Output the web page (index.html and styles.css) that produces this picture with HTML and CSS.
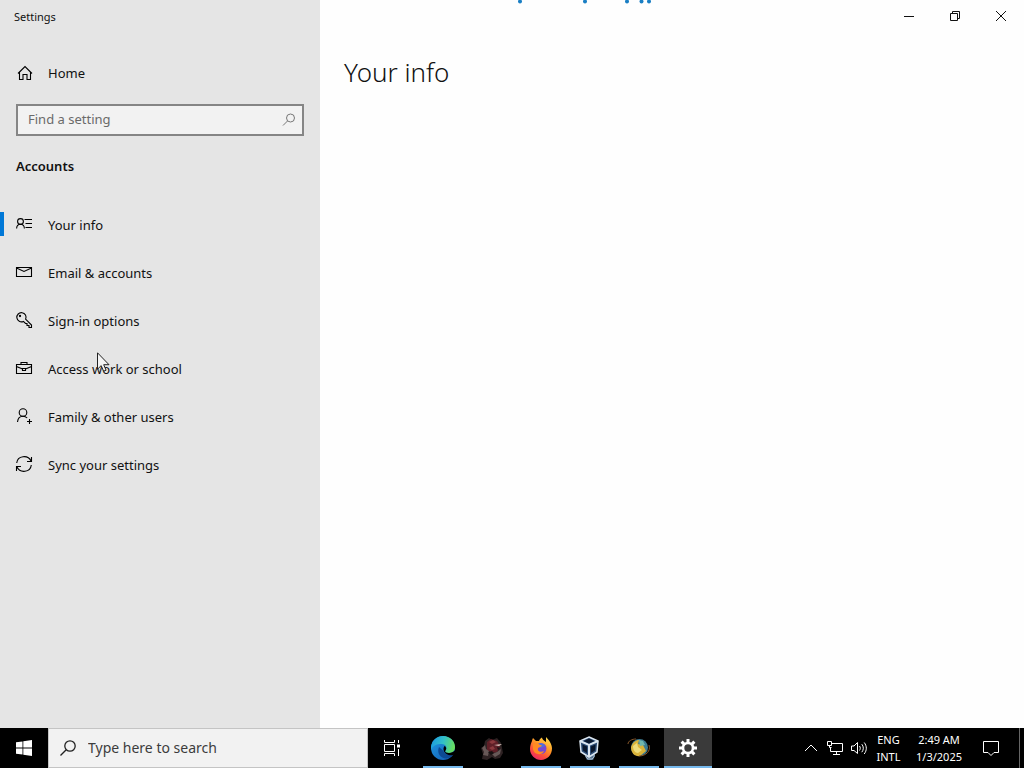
FILE: index.html
```html
<!DOCTYPE html>
<html lang="en">
<head>
<meta charset="utf-8">
<meta name="viewport" content="width=device-width, initial-scale=1">
<title>Settings</title>
<link rel="stylesheet" href="styles.css">
</head>
<body>
<div class="window">
  <aside class="sidebar">
    <div class="app-title">Settings</div>
    <a class="home" href="#home">
      <svg class="icon" viewBox="0 0 16 16"><path d="M2 8.500 9 1.500l7 7M3.500 7.500v7H7v-5h4v5h3.500v-7"/></svg>
      <span>Home</span>
    </a>
    <div class="find">
      <input class="find-input" type="search" placeholder="Find a setting" aria-label="Find a setting">
      <svg class="find-icon" viewBox="0 0 16 16"><circle cx="9.500" cy="6" r="4"/><path d="M6.500 9 2 13.500"/></svg>
    </div>
    <h2 class="section">Accounts</h2>
    <nav class="nav">
      <a class="nav-item active" href="#info">
        <svg class="icon" viewBox="0 0 16 16"><circle cx="4.500" cy="5.500" r="2.900"/><path d="M.6 12.500C.8 6.800 8.200 6.800 8.400 12.500M8.500 3.500H16M9.500 7.500H16M9.500 11.500H16"/></svg>
        <span>Your info</span>
      </a>
      <a class="nav-item" href="#email">
        <svg class="icon" viewBox="0 0 16 16"><path d="M.5 3.500h15v9H.5zM.5 4 8 7.500 15.500 4"/></svg>
        <span>Email &amp; accounts</span>
      </a>
      <a class="nav-item" href="#signin">
        <svg class="icon" viewBox="0 0 16 16"><path d="M9.600 7.200 15.500 13v2.500H13v-2h-2v-2H9.500L7.400 9.400A4.600 4.600 0 1 1 9.600 7.200z"/><circle cx="4" cy="4" r=".6"/></svg>
        <span>Sign-in options</span>
      </a>
      <a class="nav-item" href="#work">
        <svg class="icon" viewBox="0 0 16 16"><path d="M.5 4.500h15v9H.5zM5 4.500v-2h6v2M.5 6.500l6 2.500M15.500 6.500l-6 2.500M6.500 8.500v2h3v-2z"/></svg>
        <span>Access work or school</span>
      </a>
      <a class="nav-item" href="#family">
        <svg class="icon" viewBox="0 0 16 16"><circle cx="7" cy="4.500" r="3.800"/><path d="M1.500 14c.4-4 2.500-5.800 5.500-5.800 1.800 0 3.200.7 4.200 1.800M13.500 11v5M11 13.500h5"/></svg>
        <span>Family &amp; other users</span>
      </a>
      <a class="nav-item" href="#sync">
        <svg class="icon" viewBox="0 0 16 16"><path d="M.7 7C1.500-.5 12-1.500 15 5M15.500 1v4.500H11M15.300 9C14.500 16.500 4 17.500 1 11M.5 15v-4.500H5"/></svg>
        <span>Sync your settings</span>
      </a>
    </nav>
  </aside>
  <main class="content">
    <header class="titlebar">
      <button class="win-btn" aria-label="Minimize"><svg viewBox="0 0 10 10"><path d="M0 5.500h10"/></svg></button>
      <button class="win-btn" aria-label="Restore"><svg viewBox="0 0 10 10"><path d="M.5 2.500h7v7h-7zM2.500 2.500v-2h7v7h-2"/></svg></button>
      <button class="win-btn" aria-label="Close"><svg viewBox="0 0 10 10"><path d="m0 0 10 10M10 0 0 10"/></svg></button>
    </header>
    <h1 class="page-title">Your info</h1>
    <svg class="progress" viewBox="0 0 134 4"><circle cx="3" cy="1.500" r="2"/><circle cx="68" cy="1.500" r="2"/><circle cx="110" cy="1.500" r="2"/><circle cx="124.500" cy="1.500" r="2"/><circle cx="132" cy="1.500" r="2"/></svg>
  </main>
  <svg class="cursor" viewBox="0 0 13 20"><path d="M.5.800v16.400l3.700-3.600 2.400 5.600 2.500-1-2.400-5.500H12z"/></svg>
</div>
<footer class="taskbar">
  <button class="task start" aria-label="Start"><svg class="win-logo" viewBox="0 0 16 16"><path d="M0 2.300 6.500 1.400v6.200H0zM7.300 1.300 16 0v7.600H7.300zM0 8.400h6.500v6.200L0 13.700zM7.300 8.400H16V16l-8.700-1.300z"/></svg></button>
  <label class="search">
    <svg class="search-icon" viewBox="0 0 16 16"><circle cx="10" cy="6" r="5.200"/><path d="M6.200 9.800.5 15.500"/></svg>
    <input class="search-input" type="search" placeholder="Type here to search" aria-label="Type here to search">
  </label>
  <button class="task" aria-label="Task view"><svg class="task-view" viewBox="0 0 16 16"><path d="M.5 0v2.500h10V0M.5 4.500h10v7H.5zM.5 16v-2.500h10V16M14.500 0v3M14.500 9v7"/><path class="solid" d="M13 4.500h3v3h-3z"/></svg></button>
  <div class="apps">
    <button class="task running" aria-label="Edge">
      <svg class="app-icon" viewBox="0 0 24 24">
        <defs>
          <linearGradient id="edge-top" x1="0" y1=".3" x2="1" y2=".5"><stop offset="0" stop-color="#1c9be0"/><stop offset=".5" stop-color="#32c0c8"/><stop offset="1" stop-color="#6be05a"/></linearGradient>
          <linearGradient id="edge-low" x1="0" y1="0" x2="1" y2="1"><stop offset="0" stop-color="#1f9de4"/><stop offset="1" stop-color="#1256b0"/></linearGradient>
        </defs>
        <circle cx="12" cy="12" r="12" fill="url(#edge-low)"/>
        <path fill="#0d4a94" d="M8 11c-3 7 3 13 10 11 2-.8 3.500-2 4.500-3.800-4 2-9 .8-10-3.200z"/>
        <path fill="url(#edge-top)" d="M0 11C1 4 6 0 12 0c7 0 12 5 12 11 0 4-3 6-6 6-3.500 0-4.500-1.500-3.500-2.500 2-2 1-6.500-4-6.500C6 8 2 9 0 14z"/>
        <path fill="#000" d="M14.500 14.500c-1 1 0 2.500 3.500 2.500 2.500 0 5-1 6.500-3-.2 2-1 3.600-2 4.900-5 1.600-10-1.400-10-5.900 0-1.300.6-2.400 1.200-3 1.700 1 1.900 3.200.8 4.500z"/>
      </svg>
    </button>
    <button class="task" aria-label="Dragon">
      <svg class="app-icon" viewBox="0 0 24 24">
        <path fill="#2e2223" d="m1 12 3-2 1-5 4-3 3 2 5-2 4 5 1 5 1 5-3 5-5 1-3-2-5 3-5-1 1-5z"/>
        <path fill="#5f1f27" d="m7 6 4-3 6 2 3 5-3 6-5 1-5-3z"/>
        <path fill="#8c3a3e" d="m9 6 4-2 3 2-4 2zM9 12l4-2 2 3-3 1z"/>
        <path fill="#675857" d="m2 12 3-3 1 4 3 2-1 5-5-1 1-3zM12 18l5-2 4-3-1 5-5 3z"/>
        <path fill="#e0cbc4" d="m14 9 8-1-3 2z"/>
        <path fill="#181112" d="m8 16 4-1 2 2-3 2zM17 11l3 1-2 2z"/>
      </svg>
    </button>
    <button class="task running" aria-label="Firefox">
      <svg class="app-icon" viewBox="0 0 24 24">
        <defs><linearGradient id="fox" x1=".8" y1="0" x2=".2" y2="1"><stop offset="0" stop-color="#ffe04a"/><stop offset=".4" stop-color="#ff9626"/><stop offset=".7" stop-color="#fc4d3c"/><stop offset="1" stop-color="#e8246b"/></linearGradient></defs>
        <path fill="url(#fox)" d="M3 5c0-1 .5-2 1-3l3 3h3c.6-2 2-3 3-3.500 0 2 2 3 4 4.500V1c3 3 6 7 6 11.500C23 19 18 24 12 24S1 19 1 13c0-3 .8-5 2-8z"/>
        <circle cx="12" cy="12.500" r="5.500" fill="#7848cf"/>
        <path fill="#4c70dc" d="M7 10c3-4 8-3 9 0l-4 2z"/>
        <path fill="#ff8b22" d="M4 8c3-2 5-1 7 1 1 0 2 .5 2 1l-4 2c-1 3 2 5 6 3-2 5-10 4-11-2z"/>
      </svg>
    </button>
    <button class="task running" aria-label="VirtualBox">
      <svg class="app-icon" viewBox="0 0 24 24">
        <path fill="#53718f" d="m7 16 5 3 5-3v4l-2 4H9l-2-4z"/>
        <path fill="#2c4c74" stroke="#dbe6f0" stroke-width="1.500" d="m11 1 9 4-1 11-8 5-8-5L2 5z"/>
        <path fill="#18345c" stroke="#dbe6f0" stroke-width="2" d="m2 5 9 4 9-4M11 9v12"/>
        <path fill="#09162b" d="m6 5 5-2.500L16 5l-5 2.500zM4.500 8.500l4.500 2v6.500l-4-2.500zM17.500 8.500l-4.500 2v6.500l4-2.500z"/>
        <path fill="none" stroke="#aabbc9" d="M8 19v2l2 2h4l2-2v-2"/>
      </svg>
    </button>
    <button class="task running" aria-label="Globe">
      <svg class="app-icon" viewBox="0 0 24 24">
        <circle cx="12.500" cy="11.500" r="8.500" fill="#3e7c92"/>
        <path fill="#d9b33a" d="M4 11c2-5 5-7 8-7l-1 4 5 1 3 6-6 5c-4 1-9-2-9-9z"/>
        <path fill="#ecdc7c" d="m6 10 4-3 1 4 4 3-4 3c-3 0-5-3-5-7z"/>
        <path fill="#70b7ad" d="m12 4 4 1 2 4-5 1z"/>
        <path fill="none" stroke="#84552a" d="M1 8c0-3 4-5 8-5M22 9c2 6-3 11-10 11"/>
      </svg>
    </button>
    <button class="task running current" aria-label="Settings">
      <svg class="gear" viewBox="0 0 18 18"><circle cx="9" cy="9" r="5" fill="none" stroke="#fff" stroke-width="2.600"/><path fill="none" stroke="#fff" stroke-width="3" d="M9 0v3.500M9 14.500V18M0 9h3.500M14.500 9H18M2.600 2.600l2.500 2.500M12.900 12.900l2.500 2.500M2.600 15.400l2.500-2.500M12.900 5.100l2.500-2.500"/></svg>
    </button>
  </div>
  <div class="tray">
    <button class="tray-btn" aria-label="Show hidden icons"><svg viewBox="0 0 16 16"><path d="m2 11 6-6 6 6"/></svg></button>
    <button class="tray-btn" aria-label="Network"><svg viewBox="0 0 16 16"><path d="M4.500 3.500h11v8H3.500v-4M.5 1.500h4v4h-4zM2.500 5.500v2h2M9.500 11.500v3M6 14.500h7"/></svg></button>
    <button class="tray-btn" aria-label="Volume"><svg viewBox="0 0 16 16"><path d="M.5 6v4.500H3l3.500 3V2.500L3 6zM8.500 6c1 1.200 1 3.200 0 4.500M10.800 4.200c2 2.300 2 5.700 0 8M13.200 2.500c2.800 3.500 2.800 8 0 11.500"/></svg></button>
    <button class="lang"><span>ENG</span><span>INTL</span></button>
    <button class="clock"><span>2:49 AM</span><span>1/3/2025</span></button>
    <button class="notify" aria-label="Notifications"><svg viewBox="0 0 16 16"><path d="M.5 1.500h15v11H11l-3 3-3-3H.5z"/></svg></button>
    <button class="desktop" aria-label="Show desktop"></button>
  </div>
</footer>
</body>
</html>
```
FILE: styles.css
```css
* { box-sizing: border-box; }

body {
  margin: 0;
  min-height: 100vh;
  display: flex;
  flex-direction: column;
  background: #fefefe;
  color: #111;
  font-family: "Noto Sans", "Open Sans", sans-serif;
  font-size: 13px;
  line-height: 20px;
}

button {
  margin: 0;
  padding: 0;
  border: 0;
  background: transparent;
  color: inherit;
  font: inherit;
}

input { font: inherit; color: inherit; }
input::-webkit-search-cancel-button { display: none; }
a { color: inherit; text-decoration: none; }
svg { display: block; flex: none; }

.window { position: relative; flex: 1; display: flex; }

.sidebar { width: 320px; flex: none; background: #e5e5e5; }

.app-title {
  height: 32px;
  padding-left: 14px;
  font-size: 11px;
  line-height: 34px;
}

.home, .nav-item {
  display: flex;
  align-items: center;
  gap: 16px;
  height: 48px;
  padding-left: 16px;
}

.home { margin-top: 17px; }

.icon {
  width: 16px;
  height: 16px;
  overflow: visible;
  fill: none;
  stroke: #000;
  stroke-width: 1.1;
}

.find { position: relative; margin: 7px 16px 0; }

.find-input {
  display: block;
  width: 100%;
  height: 32px;
  padding: 0 32px 2px 10px;
  border: 2px solid #858585;
  border-radius: 0;
  outline: 0;
  background: #f2f2f2;
}

.find-input::placeholder { color: #6a6a6a; opacity: 1; }

.find-icon {
  position: absolute;
  top: 8px;
  right: 7px;
  width: 16px;
  height: 16px;
  fill: none;
  stroke: #777;
}

.section {
  margin: 20px 16px 0;
  font-size: 13px;
  font-weight: 600;
  line-height: 20px;
}

.nav { margin-top: 25px; }
.nav .icon { margin-bottom: 2px; }

.nav-item.active {
  background: linear-gradient(#0078d7, #0078d7) left 11px / 4px 24px no-repeat;
}

.content { position: relative; flex: 1; min-width: 0; }

.titlebar { display: flex; justify-content: flex-end; height: 32px; }

.win-btn { width: 46px; display: grid; place-items: center; }
.win-btn svg { width: 10px; height: 10px; fill: none; stroke: #111; }

.page-title {
  margin: 20px 24px 0;
  font-size: 26px;
  font-weight: 300;
  line-height: 40px;
}

.progress {
  position: absolute;
  top: 0;
  left: 28%;
  width: 134px;
  height: 4px;
  fill: #1a7fc4;
}

.cursor {
  position: absolute;
  top: 352px;
  left: 97px;
  width: 13px;
  height: 20px;
  fill: #f4f4f4;
  stroke: #222;
}

.taskbar { display: flex; height: 40px; flex: none; background: #000; color: #fff; }

.task { position: relative; width: 48px; height: 40px; display: grid; place-items: center; }

.win-logo { width: 16px; height: 16px; fill: #fff; }

.search {
  display: flex;
  align-items: center;
  gap: 12px;
  width: 320px;
  padding-left: 11px;
  border: 1px solid #c4c4c4;
  background: #f2f2f2;
  color: #333;
}

.search-icon { width: 16px; height: 16px; fill: none; stroke: #222; stroke-width: 1.3; }

.search-input {
  flex: 1;
  min-width: 0;
  padding: 0;
  border: 0;
  outline: 0;
  background: transparent;
  font-size: 14px;
}

.search-input::placeholder { color: #3c3c3c; opacity: 1; }

.task-view { width: 16px; height: 16px; fill: none; stroke: #fff; }
.task-view .solid { fill: #fff; stroke: none; }

.apps { display: flex; gap: 1px; margin-left: 3px; }

.app-icon { width: 24px; height: 24px; }
.gear { width: 18px; height: 18px; }

.running::after {
  content: "";
  position: absolute;
  left: 4px;
  right: 4px;
  bottom: 0;
  height: 2px;
  background: #76b9ed;
}

.current { background: #3a3a3a; }
.current::after { left: 0; right: 0; }

.tray { display: flex; margin-left: auto; font-size: 11px; line-height: 17px; }
.tray svg { width: 16px; height: 16px; fill: none; stroke: #fff; }

.tray-btn { width: 24px; display: grid; place-items: center; }

.lang, .clock { display: flex; flex-direction: column; align-items: center; justify-content: center; }
.lang { width: 35px; }
.clock { width: 66px; }

.notify { width: 38px; margin-right: 9px; display: grid; place-items: center; }

.desktop { width: 5px; border-left: 1px solid #666; }
```
